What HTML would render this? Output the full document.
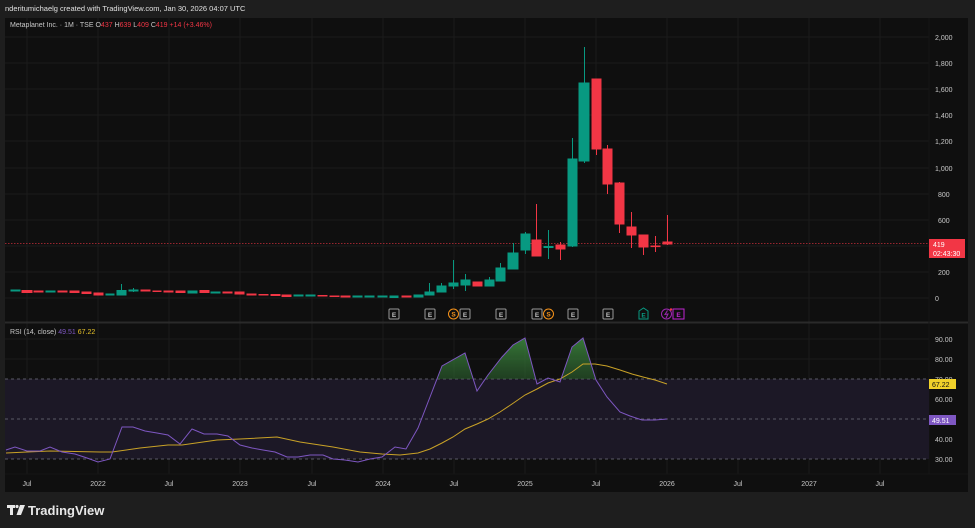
<!DOCTYPE html>
<html><head><meta charset="utf-8"><style>
html,body{margin:0;padding:0;background:#1e1e1e;width:975px;height:528px;overflow:hidden;font-family:"Liberation Sans",sans-serif}
svg{display:block}
</style></head><body>
<svg width="975" height="528" viewBox="0 0 975 528" xmlns="http://www.w3.org/2000/svg" font-family="Liberation Sans, sans-serif">
<defs>
<linearGradient id="gf" x1="0" y1="0" x2="0" y2="1"><stop offset="0" stop-color="#3d8a3f" stop-opacity="0.85"/><stop offset="1" stop-color="#1b3a1e" stop-opacity="0.3"/></linearGradient>
<clipPath id="above"><rect x="0" y="320" width="930" height="59"/></clipPath>
</defs>
<rect width="975" height="528" fill="#1e1e1e"/>
<text x="5" y="11" font-size="7.5" fill="#e0e0e0">nderitumichaelg created with TradingView.com, Jan 30, 2026 04:07 UTC</text>
<rect x="5" y="18" width="963" height="474" fill="#0f0f0f"/>
<!-- grid -->
<g stroke="#1b1b1b" stroke-width="1">
<line x1="5" y1="37" x2="929" y2="37"/><line x1="5" y1="63" x2="929" y2="63"/><line x1="5" y1="89" x2="929" y2="89"/><line x1="5" y1="115" x2="929" y2="115"/><line x1="5" y1="141" x2="929" y2="141"/><line x1="5" y1="168" x2="929" y2="168"/><line x1="5" y1="194" x2="929" y2="194"/><line x1="5" y1="220" x2="929" y2="220"/><line x1="5" y1="246" x2="929" y2="246"/><line x1="5" y1="272" x2="929" y2="272"/><line x1="5" y1="298" x2="929" y2="298"/>
<line x1="5" y1="339" x2="929" y2="339"/><line x1="5" y1="359" x2="929" y2="359"/><line x1="5" y1="399" x2="929" y2="399"/><line x1="5" y1="439" x2="929" y2="439"/>
<line x1="27" y1="18" x2="27" y2="474"/><line x1="98" y1="18" x2="98" y2="474"/><line x1="169" y1="18" x2="169" y2="474"/><line x1="240" y1="18" x2="240" y2="474"/><line x1="312" y1="18" x2="312" y2="474"/><line x1="383" y1="18" x2="383" y2="474"/><line x1="454" y1="18" x2="454" y2="474"/><line x1="525" y1="18" x2="525" y2="474"/><line x1="596" y1="18" x2="596" y2="474"/><line x1="667" y1="18" x2="667" y2="474"/><line x1="738" y1="18" x2="738" y2="474"/><line x1="809" y1="18" x2="809" y2="474"/><line x1="880" y1="18" x2="880" y2="474"/>
</g>
<line x1="5" y1="322.5" x2="968" y2="322.5" stroke="#2a2a2a" stroke-width="2"/>
<line x1="929" y1="18" x2="929" y2="474" stroke="#151515"/>
<!-- legend -->
<text x="10" y="27" font-size="7" fill="#c8c8c8">Metaplanet Inc. · 1M · TSE <tspan fill="#c8c8c8">O</tspan><tspan fill="#f23645">437</tspan> <tspan fill="#c8c8c8">H</tspan><tspan fill="#f23645">639</tspan> <tspan fill="#c8c8c8">L</tspan><tspan fill="#f23645">409</tspan> <tspan fill="#c8c8c8">C</tspan><tspan fill="#f23645">419</tspan> <tspan fill="#f23645">+14 (+3.46%)</tspan></text>
<!-- price line -->
<line x1="5" y1="243.5" x2="929" y2="243.5" stroke="#f23645" stroke-width="0.7" stroke-dasharray="1.5,1.5" opacity="0.8"/>
<!-- candles -->
<g stroke-width="1">
<g fill="#089981" stroke="#089981">
<rect x="11" y="290" width="9" height="1"/><rect x="46" y="291" width="9" height="1"/><rect x="106" y="294" width="8" height="1"/>
<line x1="121.5" y1="284" x2="121.5" y2="291"/><rect x="117" y="290.5" width="9" height="4.5"/>
<line x1="133.5" y1="288" x2="133.5" y2="292"/><rect x="129" y="290" width="9" height="1"/>
<rect x="188" y="291" width="9" height="2"/><rect x="211" y="292" width="9" height="1"/>
<rect x="294" y="295" width="9" height="1"/><rect x="306" y="295" width="9" height="1"/><rect x="353" y="296" width="9" height="1"/><rect x="365" y="296" width="9" height="1"/>
<rect x="378" y="296" width="9" height="1"/><rect x="390" y="296" width="8" height="1.5"/><rect x="414" y="295" width="9" height="2"/>
<line x1="429.5" y1="283" x2="429.5" y2="292"/><rect x="425" y="292" width="9" height="3"/>
<line x1="441.5" y1="283" x2="441.5" y2="286"/><rect x="437" y="286" width="9" height="6"/>
<line x1="453.5" y1="260" x2="453.5" y2="289"/><rect x="449" y="283" width="9" height="3"/>
<line x1="465.5" y1="274" x2="465.5" y2="291"/><rect x="461" y="280" width="9" height="5"/>
<line x1="489.5" y1="277" x2="489.5" y2="280"/><rect x="485" y="280" width="9" height="6"/>
<line x1="500.5" y1="263" x2="500.5" y2="268"/><rect x="496" y="268" width="9" height="13"/>
<line x1="513.5" y1="243" x2="513.5" y2="269"/><rect x="508" y="253" width="10" height="16"/>
<line x1="525.5" y1="232" x2="525.5" y2="254"/><rect x="521" y="234" width="9" height="16"/>
<line x1="548.5" y1="230" x2="548.5" y2="259"/><rect x="544" y="246.5" width="9" height="1"/>
<line x1="572.5" y1="138" x2="572.5" y2="247"/><rect x="568" y="159" width="9" height="87"/>
<line x1="584.5" y1="47" x2="584.5" y2="163"/><rect x="579" y="83" width="10" height="78"/>
<line x1="655.5" y1="236" x2="655.5" y2="252" stroke="#f23645"/>
</g>
<g fill="#f23645" stroke="#f23645">
<rect x="22" y="290.5" width="10" height="2"/><rect x="34" y="291" width="9" height="1"/><rect x="58" y="291" width="9" height="1"/><rect x="70" y="291" width="9" height="1.5"/><rect x="82" y="292" width="9" height="1.5"/><rect x="94" y="293" width="9" height="2"/>
<rect x="141" y="290" width="9" height="1"/><rect x="153" y="291" width="8" height="0.5"/><rect x="164" y="291" width="9" height="1"/><rect x="176" y="291" width="9" height="1.5"/><rect x="200" y="290.5" width="9" height="2"/><rect x="223" y="292" width="9" height="1"/><rect x="235" y="292" width="9" height="2"/><rect x="247" y="294" width="9" height="1"/><rect x="259" y="294.5" width="9" height="0.5"/><rect x="271" y="294.5" width="9" height="1"/><rect x="282" y="295" width="9" height="1.5"/><rect x="318" y="295.5" width="9" height="0.5"/><rect x="330" y="296" width="9" height="0.5"/><rect x="341" y="296" width="9" height="1"/>
<rect x="402" y="296" width="9" height="1"/><rect x="473" y="282" width="9" height="4"/>
<line x1="536.5" y1="204" x2="536.5" y2="256"/><rect x="532" y="240" width="9" height="16"/>
<line x1="560.5" y1="242" x2="560.5" y2="260"/><rect x="556" y="245" width="9" height="4"/>
<line x1="596.5" y1="79" x2="596.5" y2="155"/><rect x="592" y="79" width="9" height="70"/>
<line x1="607.5" y1="145" x2="607.5" y2="194"/><rect x="603" y="149" width="9" height="35"/>
<line x1="619.5" y1="182" x2="619.5" y2="233"/><rect x="615" y="183" width="9" height="41"/>
<line x1="631.5" y1="212" x2="631.5" y2="248"/><rect x="627" y="227" width="9" height="8"/>
<line x1="643.5" y1="235" x2="643.5" y2="255"/><rect x="639" y="235" width="9" height="12"/>
<rect x="651" y="246" width="9" height="0.6"/>
<line x1="667.5" y1="215" x2="667.5" y2="245"/><rect x="663" y="242" width="9" height="2"/>
</g>
</g>
<!-- events -->
<g font-size="6.5" font-weight="bold" text-anchor="middle">
<g fill="#0f0f0f" stroke="#9a9a9a" stroke-width="1">
<rect x="389" y="309" width="10" height="10" rx="1"/><rect x="425" y="309" width="10" height="10" rx="1"/><rect x="460" y="309" width="10" height="10" rx="1"/><rect x="496" y="309" width="10" height="10" rx="1"/><rect x="532" y="309" width="10" height="10" rx="1"/><rect x="568" y="309" width="10" height="10" rx="1"/><rect x="603" y="309" width="10" height="10" rx="1"/>
</g>
<g fill="#c0c0c0"><text x="394" y="317">E</text><text x="430" y="317">E</text><text x="465" y="317">E</text><text x="501" y="317">E</text><text x="537" y="317">E</text><text x="573" y="317">E</text><text x="608" y="317">E</text></g>
<circle cx="453.5" cy="314" r="5" fill="none" stroke="#f7931a"/><text x="453.5" y="316.5" fill="#f7931a">S</text>
<circle cx="548.5" cy="314" r="5" fill="none" stroke="#f7931a"/><text x="548.5" y="316.5" fill="#f7931a">S</text>
<path d="M639 311 L643.5 308 L648 311 L648 319 L639 319 Z" fill="none" stroke="#089981"/><text x="643.5" y="317.5" fill="#089981">E</text>
<circle cx="666.5" cy="314" r="5" fill="none" stroke="#9c27b0"/><path d="M667.5 310.5 L665 314.5 L668 314 L666 318" fill="none" stroke="#9c27b0"/>
<circle cx="671" cy="309.5" r="1.2" fill="#f23645"/>
<rect x="673" y="309" width="11" height="10" fill="none" stroke="#c026d3"/><text x="678.5" y="317" fill="#c026d3">E</text>
</g>
<!-- RSI -->
<text x="10" y="334" font-size="7" fill="#c8c8c8">RSI (14, close) <tspan fill="#7e57c2">49.51</tspan> <tspan fill="#e6c229">67.22</tspan></text>
<rect x="5" y="379" width="924" height="80" fill="#1c1826"/>
<g stroke="#5a5a66" stroke-dasharray="3,3" stroke-width="1"><line x1="5" y1="379" x2="929" y2="379"/><line x1="5" y1="419" x2="929" y2="419"/><line x1="5" y1="459" x2="929" y2="459"/></g>
<g clip-path="url(#above)">
<polygon fill="url(#gf)" points="430,397 442,366 465,353 477,391 488,375 502,357 513,345 525,338 537,384 548,378 560,382 572,347 583,338 596,380 607,397 607,420 430,420"/>
</g>
<polyline fill="none" stroke="#c9a227" stroke-width="1" points="6,453 27,452 50,451 100,452 112,452 140,448 168,445 182,445 217,440 240,439 277,437 300,442 333,447 360,452 382,454 400,455 418,453 430,449 442,443 453,437 465,429 477,424 488,419 500,412 512,404 525,395 537,389 548,383 560,379 572,372 583,364 595,364 607,366 620,370 632,374 643,377 655,380 667,384"/>
<polyline fill="none" stroke="#7e57c2" stroke-width="1" points="6,450 15,447 27,451 40,451 50,447 62,452 75,454 87,458 98,462 110,459 122,427 133,427 145,431 157,433 168,435 180,444 192,429 204,434 217,434 228,436 240,445 252,448 263,450 275,452 287,457 298,457 310,455 323,455 333,459 345,460 358,462 370,459 382,457 395,447 406,449 418,428 430,397 442,366 465,353 477,391 488,375 502,357 513,345 525,338 537,384 548,378 560,382 572,347 583,338 596,380 607,397 620,412 630,416 642,420 655,420 667,419"/>
<!-- price axis -->
<g font-size="7" fill="#c8c8c8">
<text x="935" y="40">2,000</text><text x="935" y="66">1,800</text><text x="935" y="92">1,600</text><text x="935" y="118">1,400</text><text x="935" y="144">1,200</text><text x="935" y="171">1,000</text><text x="938" y="197">800</text><text x="938" y="223">600</text><text x="938" y="275">200</text><text x="935" y="301">0</text>
<text x="935" y="342">90.00</text><text x="935" y="362">80.00</text><text x="935" y="382">70.00</text><text x="935" y="402">60.00</text><text x="935" y="442">40.00</text><text x="935" y="462">30.00</text>
</g>
<rect x="929" y="239" width="36" height="19" fill="#f23645"/>
<text x="933" y="247" font-size="7" fill="#fff">419</text><text x="933" y="256" font-size="7" fill="#fff">02:43:30</text>
<rect x="929" y="379" width="27" height="10" fill="#f0d12a"/><text x="932" y="387" font-size="7" fill="#111">67.22</text>
<rect x="929" y="415" width="27" height="10" fill="#7e57c2"/><text x="932" y="423" font-size="7" fill="#fff">49.51</text>
<!-- time axis -->
<line x1="5" y1="474" x2="968" y2="474" stroke="#151515"/>
<g font-size="7" fill="#c8c8c8" text-anchor="middle">
<text x="27" y="486">Jul</text><text x="98" y="486">2022</text><text x="169" y="486">Jul</text><text x="240" y="486">2023</text><text x="312" y="486">Jul</text><text x="383" y="486">2024</text><text x="454" y="486">Jul</text><text x="525" y="486">2025</text><text x="596" y="486">Jul</text><text x="667" y="486">2026</text><text x="738" y="486">Jul</text><text x="809" y="486">2027</text><text x="880" y="486">Jul</text>
</g>
<!-- logo -->
<g fill="#e8e8e8">
<rect x="7" y="505" width="8" height="3"/><rect x="10" y="505" width="3" height="10"/>
<circle cx="17" cy="506.5" r="1.6"/>
<path d="M20 505 L25 505 L21 515 L16.5 515 Z"/>
</g>
<text x="28" y="515" font-size="13" font-weight="bold" fill="#e8e8e8">TradingView</text>
</svg>
</body></html>
